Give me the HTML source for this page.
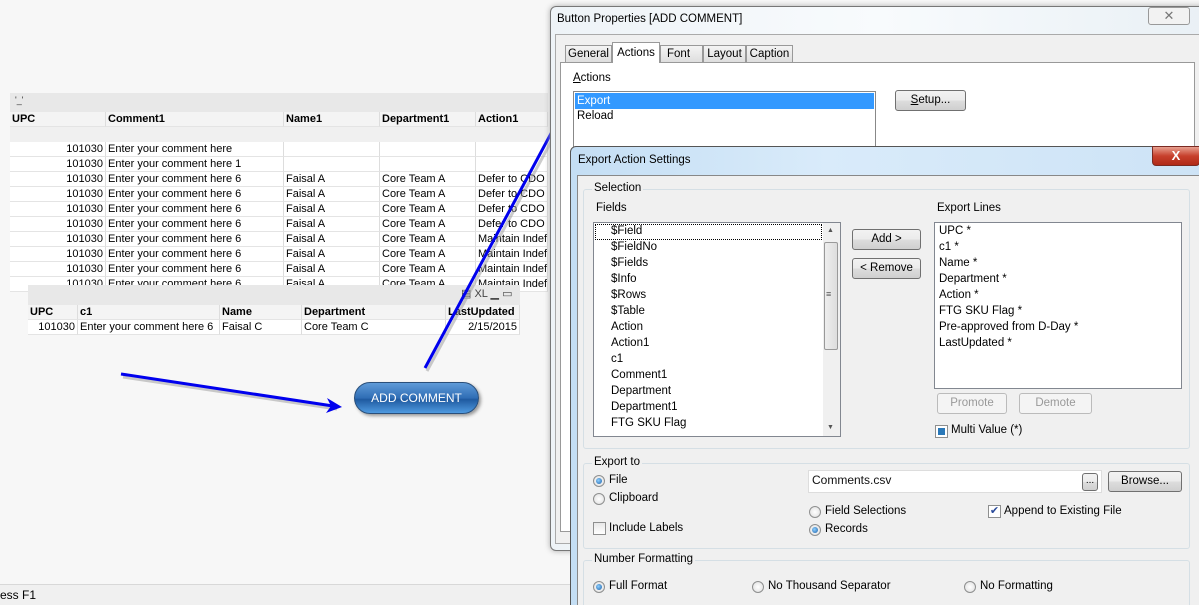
<!DOCTYPE html>
<html><head><meta charset="utf-8"><style>
*{box-sizing:border-box;margin:0;padding:0}
html,body{width:1199px;height:605px;overflow:hidden}
body{background:#f7f7f7;font-family:"Liberation Sans",sans-serif;font-size:11px;color:#000;position:relative}
.a{position:absolute;white-space:nowrap}
.cell{position:absolute;height:15px;line-height:14px;border-right:1px solid #ddd;border-bottom:1px solid #e4e4e4;background:#fff;padding:0 2px;overflow:hidden;white-space:nowrap;font-size:11px}
.hd{font-weight:bold;background:#f4f4f4}
.r{text-align:right}
.btn{position:absolute;border:1px solid #707070;border-radius:3px;background:linear-gradient(#f2f2f2,#ebebeb 50%,#dddddd 51%,#cfcfcf);text-align:center;font-size:11.5px;line-height:18px}
.dis{color:#999;border-color:#bbb;background:#f4f4f4}
.grp{position:absolute;border:1px solid #d5dfe5;border-radius:3px}
.lg{position:absolute;background:#f0f0f0;padding:0 2px;font-size:11.5px;top:-8px;left:8px}
.t12{font-size:11.5px}
.rad{position:absolute;width:12px;height:12px;border-radius:50%;border:1px solid #8e8f8f;background:radial-gradient(#fff,#ddd)}
.rad.on::after{content:"";position:absolute;left:2px;top:2px;width:6px;height:6px;border-radius:50%;background:radial-gradient(circle at 40% 40%,#8fd0ff,#1a5fa8)}
.chk{position:absolute;width:13px;height:13px;border:1px solid #8e8f8f;background:linear-gradient(#e8e8e8,#fff)}
</style></head><body>

<div class="a" style="left:10px;top:93px;width:538px;height:19px;background:#e8e8e8"></div>
<div class="a" style="left:15px;top:95px;font-size:9px;color:#333">'_'</div>
<div class="a" style="left:10px;top:127px;width:538px;height:15px;background:#f0f0f0"></div>
<div id="bt"></div>

<div class="a" style="left:28px;top:285px;width:492px;height:20px;background:#e8e8e8"></div>
<div class="a" style="left:461px;top:287px;font-size:11px;color:#444">&#9636; XL ▁ ▭</div>
<div id="st"></div>

<div class="a" style="left:354px;top:382px;width:125px;height:32px;border-radius:16px;border:1px solid #2a4f7a;background:linear-gradient(#5f9ad8,#2f6db5 50%,#1f5aa0 55%,#4f9ae0);color:#fff;text-align:center;line-height:30px;font-size:12px;box-shadow:2px 2px 3px #999">ADD COMMENT</div>

<svg class="a" style="left:0;top:0" width="600" height="605">
<g stroke="#999" stroke-width="3" fill="none" opacity=".5" transform="translate(2,3)"><line x1="121" y1="374" x2="335" y2="406"/><line x1="425" y1="368" x2="570" y2="100"/></g>
<g stroke="#0000ee" stroke-width="3" fill="none"><line x1="121" y1="374" x2="333" y2="406"/><line x1="425" y1="368" x2="569" y2="100"/></g>
<polygon points="342,407 327,398 331,406 326,413" fill="#0000ee"/>
<polygon points="574,92 566,107 570,103 576,108" fill="#0000ee"/>
</svg>

<div class="a" style="left:0;top:584px;width:1199px;height:21px;background:#f0f0f0;border-top:1px solid #d8d8d8;font-size:12px;line-height:20px">ess F1</div>

<!-- Button Properties dialog -->
<div class="a" style="left:550px;top:6px;width:660px;height:545px;border:1px solid #777;border-radius:6px;background:linear-gradient(90deg,#eef3f7,#f8fbfd 50%,#e9f0f5);box-shadow:0 0 6px #aaa"></div>
<div class="a t12" style="left:557px;top:13px">Button Properties [ADD COMMENT]</div>
<div class="a" style="left:1148px;top:7px;width:42px;height:18px;border:1px solid #999;border-radius:3px;background:#f2f2f2;color:#777;text-align:center;font-size:13px;line-height:16px">✕</div>
<div class="a" style="left:555px;top:34px;width:650px;height:510px;background:#f0f0f0;border:1px solid #aaa"></div>
<div class="a" style="left:560px;top:62px;width:635px;height:470px;background:#fff;border:1px solid #999"></div>
<div class="a t12" style="left:565px;top:45px;width:47px;height:18px;border:1px solid #999;background:linear-gradient(#f4f4f4,#dedede);text-align:center;line-height:17px">General</div>
<div class="a t12" style="left:612px;top:42px;width:48px;height:21px;border:1px solid #999;border-bottom:none;background:#fff;text-align:center;line-height:20px">Actions</div>
<div class="a t12" style="left:660px;top:45px;width:43px;height:18px;border:1px solid #999;background:linear-gradient(#f4f4f4,#dedede);padding-left:6px;line-height:17px">Font</div>
<div class="a t12" style="left:703px;top:45px;width:43px;height:18px;border:1px solid #999;background:linear-gradient(#f4f4f4,#dedede);text-align:center;line-height:17px">Layout</div>
<div class="a t12" style="left:746px;top:45px;width:47px;height:18px;border:1px solid #999;background:linear-gradient(#f4f4f4,#dedede);text-align:center;line-height:17px">Caption</div>
<div class="a t12" style="left:573px;top:72px"><u>A</u>ctions</div>
<div class="a" style="left:573px;top:91px;width:303px;height:70px;border:1px solid #888;background:#fff"></div>
<div class="a t12" style="left:575px;top:93px;width:299px;height:16px;background:#3399ff;color:#fff;padding-left:2px;line-height:16px">Export</div>
<div class="a t12" style="left:577px;top:110px">Reload</div>
<div class="btn" style="left:895px;top:90px;width:71px;height:21px"><u>S</u>etup...</div>

<!-- Export Action Settings -->
<div class="a" style="left:570px;top:146px;width:640px;height:470px;border:1px solid #555;border-radius:6px;background:linear-gradient(90deg,#c4def4,#d9ebfa 40%,#cde3f6);"></div>
<div class="a t12" style="left:578px;top:154px">Export Action Settings</div>
<div class="a" style="left:1152px;top:146px;width:48px;height:20px;border:1px solid #7a2a22;border-radius:0 0 4px 4px;background:linear-gradient(#e8a090,#c7402c 50%,#b02a18);color:#fff;text-align:center;font-weight:bold;font-size:13px;line-height:18px">X</div>
<div class="a" style="left:577px;top:175px;width:630px;height:440px;background:#f0f0f0;border:1px solid #888"></div>

<div class="grp" style="left:583px;top:189px;width:607px;height:260px"><span class="lg">Selection</span></div>
<div class="a t12" style="left:596px;top:202px">Fields</div>
<div class="a" style="left:593px;top:222px;width:248px;height:215px;background:#fff;border:1px solid #828790"></div>
<div class="a" style="left:595px;top:224px;width:227px;height:16px;border:1px dotted #000"></div>
<div class="a" style="left:823px;top:223px;width:17px;height:213px;background:#f0f0f0"></div>
<div class="a" style="left:824px;top:242px;width:14px;height:108px;border:1px solid #999;border-radius:2px;background:linear-gradient(90deg,#eee,#ddd)"></div>
<div class="a" style="left:827px;top:227px;font-size:7px;color:#555">▲</div>
<div class="a" style="left:827px;top:424px;font-size:7px;color:#555">▼</div>
<div class="a" style="left:826px;top:289px;font-size:9px;color:#555">≡</div>
<div id="fl"></div>
<div class="btn" style="left:852px;top:229px;width:69px;height:21px">Add &gt;</div>
<div class="btn" style="left:852px;top:258px;width:69px;height:21px">&lt; Remove</div>
<div class="a t12" style="left:937px;top:202px">Export Lines</div>
<div class="a" style="left:934px;top:222px;width:248px;height:167px;background:#fff;border:1px solid #828790"></div>
<div id="el"></div>
<div class="btn dis" style="left:937px;top:393px;width:70px;height:21px">Promote</div>
<div class="btn dis" style="left:1019px;top:393px;width:73px;height:21px">Demote</div>
<div class="chk" style="left:935px;top:425px;background:#fff"><div style="margin:2px;width:7px;height:7px;background:#2a78b8"></div></div>
<div class="a t12" style="left:951px;top:424px">Multi Value (*)</div>

<div class="grp" style="left:583px;top:463px;width:607px;height:86px"><span class="lg">Export to</span></div>
<div class="rad on" style="left:593px;top:475px"></div><div class="a t12" style="left:609px;top:474px">File</div>
<div class="rad" style="left:593px;top:493px"></div><div class="a t12" style="left:609px;top:492px">Clipboard</div>
<div class="chk" style="left:593px;top:522px"></div><div class="a t12" style="left:609px;top:522px">Include Labels</div>
<div class="a" style="left:808px;top:470px;width:294px;height:23px;background:#fff;border:1px solid #ddd;font-size:12px;padding:2px 3px;color:#111">Comments.csv</div>
<div class="btn" style="left:1082px;top:473px;width:16px;height:18px;font-size:10px;line-height:14px">...</div>
<div class="btn" style="left:1108px;top:471px;width:74px;height:21px">Browse...</div>
<div class="rad" style="left:809px;top:506px"></div><div class="a t12" style="left:825px;top:505px">Field Selections</div>
<div class="rad on" style="left:809px;top:524px"></div><div class="a t12" style="left:825px;top:523px">Records</div>
<div class="chk" style="left:988px;top:505px;background:#fff;color:#2a4a9a;font-size:11px;line-height:11px;text-align:center">✔</div><div class="a t12" style="left:1004px;top:505px">Append to Existing File</div>

<div class="grp" style="left:583px;top:560px;width:607px;height:60px"><span class="lg">Number Formatting</span></div>
<div class="rad on" style="left:593px;top:581px"></div><div class="a t12" style="left:609px;top:580px">Full Format</div>
<div class="rad" style="left:752px;top:581px"></div><div class="a t12" style="left:768px;top:580px">No Thousand Separator</div>
<div class="rad" style="left:964px;top:581px"></div><div class="a t12" style="left:980px;top:580px">No Formatting</div>

<script>
function c(p,x,y,w,t,cls){var d=document.createElement('div');d.className='cell '+(cls||'');d.style.left=x+'px';d.style.top=y+'px';d.style.width=w+'px';d.textContent=t;p.appendChild(d);}
var bt=document.getElementById('bt');
var cx=[10,106,284,380,476],cw=[96,178,96,96,72];
var hh=['UPC','Comment1','Name1','Department1','Action1'];
hh.forEach(function(h,i){c(bt,cx[i],112,cw[i],h,'hd');});
var rows=[['101030','Enter your comment here','','',''],['101030','Enter your comment here 1','','','']];
var act=['Defer to CDO','Defer to CDO','Defer to CDO','Defer to CDO','Maintain Indefi','Maintain Indefi','Maintain Indefi','Maintain Indefi'];
act.forEach(function(a){rows.push(['101030','Enter your comment here 6','Faisal A','Core Team A',a]);});
rows.forEach(function(r,j){r.forEach(function(t,i){c(bt,cx[i],142+15*j,cw[i],t,i==0?'r':'');});});
var st=document.getElementById('st');
var sx=[28,78,220,302,446],sw=[50,142,82,144,74];
['UPC','c1','Name','Department','LastUpdated'].forEach(function(h,i){c(st,sx[i],305,sw[i],h,'hd');});
['101030','Enter your comment here 6','Faisal C','Core Team C','2/15/2015'].forEach(function(t,i){c(st,sx[i],320,sw[i],t,(i==0||i==4)?'r':'');});
var f=['$Field','$FieldNo','$Fields','$Info','$Rows','$Table','Action','Action1','c1','Comment1','Department','Department1','FTG SKU Flag'];
var fl=document.getElementById('fl');
f.forEach(function(t,i){var d=document.createElement('div');d.className='a t12';d.style.left='611px';d.style.top=(225+16*i)+'px';d.textContent=t;fl.appendChild(d);});
var e=['UPC *','c1 *','Name *','Department *','Action *','FTG SKU Flag *','Pre-approved from D-Day *','LastUpdated *'];
var el=document.getElementById('el');
e.forEach(function(t,i){var d=document.createElement('div');d.className='a t12';d.style.left='939px';d.style.top=(225+16*i)+'px';d.textContent=t;el.appendChild(d);});
</script>
</body></html>
